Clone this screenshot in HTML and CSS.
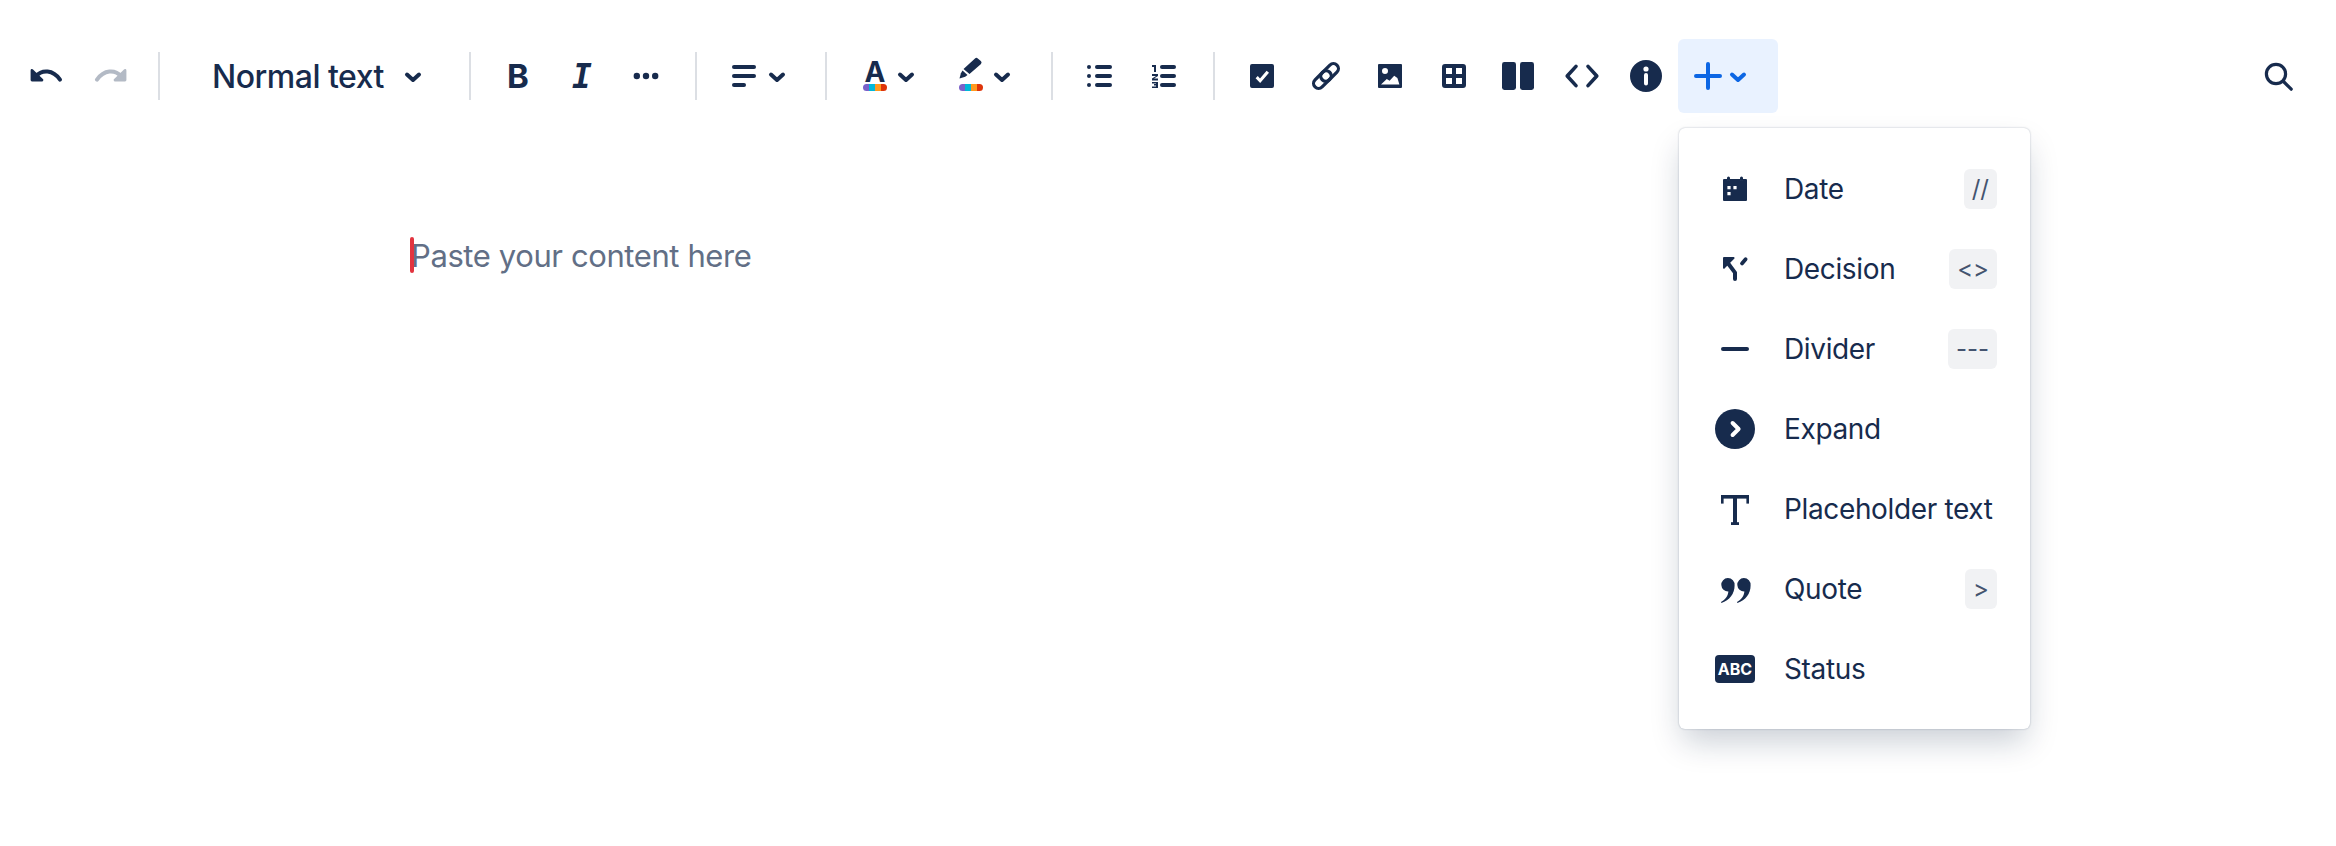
FILE: index.html
```html
<!DOCTYPE html>
<html lang="en">
<head>
<meta charset="utf-8">
<title>Editor</title>
<link rel="stylesheet" href="styles.css">
</head>
<body>
<div class="toolbar">
  <div class="tb-group">
    <button class="btn"><svg class="ic" viewBox="0 0 24 24"><path class="ln" d="M6.800 12.300C10 8.500 15.500 8.800 19 13.800"/><path class="fl" d="M4.300 9.200a.7.7 0 0 1 1.200-.5L10.300 13.400a.7.7 0 0 1-.5 1.300H5a.7.7 0 0 1-.7-.7z"/></svg></button>
    <button class="btn off"><svg class="ic" viewBox="0 0 24 24"><path class="ln" d="M17.700 12.300C14.500 8.500 9 8.800 5.500 13.800"/><path class="fl" d="M20.200 9.200a.7.7 0 0 0-1.200-.5L14.200 13.400a.7.7 0 0 0 .5 1.300h4.800a.7.7 0 0 0 .7-.7z"/></svg></button>
  </div>
  <div class="sep"></div>
  <button class="btn style-btn"><span class="style-label">Normal text</span><svg class="chev" viewBox="0 0 24 24"><path d="M6 10.500l6 5.500 6-5.500"/></svg></button>
  <div class="sep sep-b"></div>
  <div class="tb-group">
    <button class="btn"><span class="glyph-b">B</span></button>
    <button class="btn"><span class="glyph-i">I</span></button>
    <button class="btn"><svg class="ic" viewBox="0 0 24 24"><circle class="fl" cx="7.400" cy="12" r="1.600"/><circle class="fl" cx="12" cy="12" r="1.600"/><circle class="fl" cx="16.600" cy="12" r="1.600"/></svg></button>
  </div>
  <div class="sep sep-c"></div>
  <button class="btn split btn-align"><svg class="ic" viewBox="0 0 24 24"><rect class="fl" x="6" y="6.500" width="12" height="2" rx="1"/><rect class="fl" x="6" y="11" width="12" height="2" rx="1"/><rect class="fl" x="6" y="15.500" width="7" height="2" rx="1"/></svg><svg class="chev chev-tight" viewBox="0 0 24 24"><path d="M6 10.500l6 5.500 6-5.500"/></svg></button>
  <div class="sep sep-d"></div>
  <button class="btn split btn-color"><span class="color-ic"><span class="glyph-a">A</span><span class="rainbow"><i class="c1"></i><i class="c2"></i><i class="c3"></i><i class="c4"></i></span></span><svg class="chev chev-color" viewBox="0 0 24 24"><path d="M6 10.500l6 5.500 6-5.500"/></svg></button>
  <button class="btn split btn-color btn-pen"><span class="color-ic"><svg class="pen" viewBox="0 0 24 22"><path class="fl" d="M16 1.500a2 2 0 0 1 2.800 0l3 2.600a2 2 0 0 1 .2 2.800L10.500 17 4.500 12z"/><path class="fl" d="M3.500 13.500l5 4.500-2.300 1.800-5.700 1.600 1.400-5.200z"/></svg><span class="rainbow"><i class="c1"></i><i class="c2"></i><i class="c3"></i><i class="c4"></i></span></span><svg class="chev chev-color" viewBox="0 0 24 24"><path d="M6 10.500l6 5.500 6-5.500"/></svg></button>
  <div class="sep sep-e"></div>
  <div class="tb-group">
    <button class="btn"><svg class="ic" viewBox="0 0 24 24"><circle class="fl" cx="6.500" cy="7.500" r="1"/><circle class="fl" cx="6.500" cy="12" r="1"/><circle class="fl" cx="6.500" cy="16.500" r="1"/><rect class="fl" x="9.500" y="6.500" width="8.500" height="2" rx="1"/><rect class="fl" x="9.500" y="11" width="8.500" height="2" rx="1"/><rect class="fl" x="9.500" y="15.500" width="8.500" height="2" rx="1"/></svg></button>
    <button class="btn"><svg class="ic" viewBox="0 0 24 24"><path class="fl" d="M6 6.500h2v3.500h-1v-2.500h-1zM6 11h3v1l-2 1.300h2v1h-3v-1l2-1.300h-2zM6 15h3v3h-3v-.8h2v-.4h-1v-.8h1v-.3h-2z"/><rect class="fl" x="10" y="6.500" width="8" height="2" rx="1"/><rect class="fl" x="10" y="11" width="8" height="2" rx="1"/><rect class="fl" x="10" y="15.500" width="8" height="2" rx="1"/></svg></button>
  </div>
  <div class="sep sep-f"></div>
  <div class="tb-group">
    <button class="btn"><svg class="ic" viewBox="0 0 24 24"><path class="fl" fill-rule="evenodd" d="M7 6h10a1 1 0 0 1 1 1v10a1 1 0 0 1-1 1H7a1 1 0 0 1-1-1V7a1 1 0 0 1 1-1zm2.900 6l-1.100 1.100 2.300 2.400 4.400-5.100-1.200-1-3.300 3.800z"/></svg></button>
    <button class="btn"><svg class="ic" viewBox="0 0 24 24"><rect class="ln ln-thin" x="11.300" y="5" width="5" height="10.400" rx="2.500" transform="rotate(45 13.800 10.200)"/><rect class="ln ln-thin" x="7.700" y="8.600" width="5" height="10.400" rx="2.500" transform="rotate(45 10.200 13.800)"/></svg></button>
    <button class="btn"><svg class="ic" viewBox="0 0 24 24"><path class="fl" fill-rule="evenodd" d="M6.500 6h11a.5.5 0 0 1 .5.5v11a.5.5 0 0 1-.5.5h-11a.5.5 0 0 1-.5-.5v-11a.5.5 0 0 1 .5-.5zM9.500 8a1.500 1.500 0 1 0 0 3 1.500 1.500 0 0 0 0-3zM7.500 16.300h9.200l-1-3.300-1.600-1.100-2.300 2.500-1.400-.9z"/></svg></button>
    <button class="btn"><svg class="ic" viewBox="0 0 24 24"><path class="fl" fill-rule="evenodd" d="M7.500 6h9A1.500 1.500 0 0 1 18 7.500v9a1.500 1.500 0 0 1-1.500 1.500h-9A1.500 1.500 0 0 1 6 16.500v-9A1.500 1.500 0 0 1 7.500 6zM8 8v3h3V8zm5 0v3h3V8zm-5 5v3h3v-3zm5 0v3h3v-3z"/></svg></button>
    <button class="btn"><svg class="ic" viewBox="0 0 24 24"><rect class="fl" x="4" y="5" width="7" height="14" rx="1.200"/><rect class="fl" x="13" y="5" width="7" height="14" rx="1.200"/></svg></button>
    <button class="btn"><svg class="ic" viewBox="0 0 24 24"><path class="ln ln-code" d="M9 7.200l-4.400 4.800 4.400 4.800M15 7.200l4.400 4.800-4.400 4.800"/></svg></button>
    <button class="btn"><svg class="ic" viewBox="0 0 24 24"><path class="fl" fill-rule="evenodd" d="M12 4a8 8 0 1 1 0 16 8 8 0 0 1 0-16zm0 3.200a1.300 1.300 0 1 0 0 2.600 1.300 1.300 0 0 0 0-2.600zm-1 4.300v4.300a1 1 0 0 0 2 0v-4.300a1 1 0 0 0-2 0z"/></svg></button>
    <div class="insert">
      <button class="btn split btn-plus"><svg class="ic ic-plus" viewBox="0 0 24 24"><path d="M6 12h12M12 6v12"/></svg><svg class="chev chev-plus" viewBox="0 0 24 24"><path d="M6 10.500l6 5.500 6-5.500"/></svg></button>
      <div class="menu">
        <div class="row"><span class="slot"><svg class="ic" viewBox="0 0 24 24"><path class="fl" fill-rule="evenodd" d="M6.500 7h1.500v.300a1 1 0 0 0 1.500 0V7h5v.300a1 1 0 0 0 1.500 0V7h1.500a.5.5 0 0 1 .5.5v10a.5.500 0 0 1-.5.5h-11a.5.500 0 0 1-.5-.5v-10a.5.500 0 0 1 .5-.5zM8.200 10.500v1.600h1.600v-1.600zm3 0v1.600h1.600v-1.600zm-3 3v1.600h1.600v-1.600z"/><rect class="fl" x="8" y="5.800" width="1.500" height="2.200" rx=".75"/><rect class="fl" x="14.500" y="5.800" width="1.500" height="2.200" rx=".75"/></svg></span><span class="label">Date</span><kbd class="key">//</kbd></div>
        <div class="row"><span class="slot"><svg class="ic" viewBox="0 0 24 24"><path class="ln" d="M12 17v-3.200L8.400 9"/><path class="fl" d="M6.500 6h4.800a.5.5 0 0 1 .3.900L7 11.500a.5.5 0 0 1-1-.3V6.500a.5.5 0 0 1 .5-.5z"/><path class="ln ln-dec2" d="M15.500 9.200l1.800-2.100"/></svg></span><span class="label">Decision</span><kbd class="key">&lt;&gt;</kbd></div>
        <div class="row"><span class="slot"><svg class="ic" viewBox="0 0 24 24"><rect class="fl" x="5" y="11" width="14" height="2" rx="1"/></svg></span><span class="label">Divider</span><kbd class="key">---</kbd></div>
        <div class="row"><span class="slot"><svg class="ic" viewBox="0 0 24 24"><circle class="fl" cx="12" cy="12" r="10"/><path class="ln-w" d="M10.800 9l3 3-3 3"/></svg></span><span class="label">Expand</span></div>
        <div class="row"><span class="slot"><svg class="ic" viewBox="0 0 24 24"><rect class="fl" x="5" y="5" width="14" height="1.800"/><rect class="fl" x="5" y="5" width="1.300" height="4.300"/><rect class="fl" x="17.700" y="5" width="1.300" height="4.300"/><rect class="fl" x="11" y="5" width="2" height="15"/><rect class="fl" x="10" y="18.600" width="4" height="1.400"/></svg></span><span class="label">Placeholder text</span></div>
        <div class="row"><span class="slot"><svg class="ic" viewBox="0 0 24 24"><path class="fl" d="M8.400 6.500a3.400 3.400 0 0 1 3.400 3.800c0 4-2.500 7.500-6.600 8.700l-.2-.5c2.200-1.100 3.500-3 3.700-5.200a3.400 3.400 0 0 1-.3-6.800z"/><path class="fl" transform="translate(8 0)" d="M8.400 6.500a3.400 3.400 0 0 1 3.400 3.800c0 4-2.500 7.500-6.600 8.700l-.2-.5c2.200-1.100 3.500-3 3.700-5.200a3.400 3.400 0 0 1-.3-6.800z"/></svg></span><span class="label">Quote</span><kbd class="key">&gt;</kbd></div>
        <div class="row"><span class="slot"><span class="abc">ABC</span></span><span class="label">Status</span></div>
      </div>
    </div>
  </div>
  <button class="btn btn-search"><svg class="ic" viewBox="0 0 24 24"><circle class="ln ln-search" cx="11" cy="11" r="4.800"/><path class="ln ln-search" d="M15 15l3.600 3.600"/></svg></button>
</div>
<main class="editor">
  <p class="placeholder"><span class="caret"></span>Paste your content here</p>
</main>
</body>
</html>
```
FILE: styles.css
```css
* { box-sizing: border-box; }
html, body { margin: 0; height: 100%; background: #fff; }
body { font-family: Inter, "Liberation Sans", sans-serif; color: #172B4D; overflow: hidden; }
.toolbar { display: flex; align-items: center; padding: 39px 26px 0 14px; }
.tb-group { display: flex; align-items: center; }
button { border: 0; background: none; padding: 0; margin: 0; color: inherit; font: inherit; }
.btn { width: 64px; height: 74px; display: flex; align-items: center; justify-content: center; flex: none; }
.ic { width: 48px; height: 48px; flex: none; display: block; }
.fl { fill: #172B4D; stroke: none; }
.ln { fill: none; stroke: #172B4D; stroke-width: 2; stroke-linecap: round; stroke-linejoin: round; }
.ln-thin { stroke-width: 1.600; }
.ln-code { stroke-width: 1.800; }
.ln-dec2 { stroke-width: 1.900; }
.ln-w { fill: none; stroke: #fff; stroke-width: 2; stroke-linecap: round; stroke-linejoin: round; }
.ln-search { stroke-width: 1.600; }
.off { opacity: .32; }
.sep { width: 2px; height: 48px; background: #DCDFE4; margin: 0 16px; flex: none; }
.sep-b { margin-right: 15px; }
.sep-c { margin: 0 19px 0 17px; }
.sep-d { margin: 0 14px; }
.sep-e { margin: 0 15px 0 18px; }
.sep-f { margin: 0 15px 0 17px; }
.style-btn { width: 277px; justify-content: flex-start; padding-left: 36px; }
.style-label { font-size: 32px; font-weight: 500; line-height: 40px; letter-spacing: -.5px; white-space: nowrap; padding-top: 2px; }
.chev { width: 24px; height: 24px; flex: none; margin-left: 17px; }
.chev path { fill: none; stroke: #172B4D; stroke-width: 4; stroke-linecap: round; stroke-linejoin: round; }
.split { justify-content: flex-start; }
.btn-align { width: 95px; padding-left: 4px; }
.chev-tight { margin-left: -3px; }
.btn-color { width: 94px; padding-left: 22px; }
.btn-pen { width: 98px; padding-left: 24px; }
.chev-color { margin-left: 7px; }
.color-ic { width: 24px; display: flex; flex-direction: column; align-items: center; }
.glyph-a { font-size: 28px; font-weight: 700; line-height: 20px; height: 20px; margin-bottom: 2px; }
.pen { width: 24px; height: 22px; display: block; margin: -5px 0 5px; }
.rainbow { display: flex; width: 24px; height: 7px; border-radius: 4px; overflow: hidden; }
.rainbow i { flex: 1; display: block; }
.c1 { background: #7B61C9; }
.c2 { background: #00B8D9; }
.c3 { background: #FF991F; }
.c4 { background: #DE350B; }
.glyph-b { font-size: 33px; font-weight: 700; line-height: 1; }
.glyph-i { font-family: "DejaVu Sans Mono", monospace; font-style: italic; font-weight: 700; font-size: 33px; line-height: 1; }
.insert { position: relative; }
.btn-plus { width: 100px; background: #E9F2FF; border-radius: 6px; }
.ic-plus { margin-left: 6px; }
.ic-plus path { fill: none; stroke: #0C66E4; stroke-width: 2; stroke-linecap: round; }
.chev-plus { margin-left: -6px; }
.chev-plus path { stroke: #0C66E4; }
.btn-search { margin-left: auto; }
.menu { position: absolute; left: 1px; top: 89px; width: 351px; padding: 21px 33px 20px 32px; background: #fff; border-radius: 6px; box-shadow: 0 0 2px rgba(9, 30, 66, .31), 0 16px 32px -4px rgba(9, 30, 66, .22); }
.row { display: flex; align-items: center; height: 80px; }
.slot { width: 48px; height: 48px; display: flex; align-items: center; justify-content: center; flex: none; margin-right: 25px; }
.label { font-size: 28px; line-height: 40px; letter-spacing: -.36px; flex: 1; white-space: nowrap; }
.key { height: 40px; padding: 0 8px; background: #F1F2F4; border-radius: 6px; color: #44546F; font-family: Inter, sans-serif; font-size: 24px; line-height: 40px; }
.abc { width: 40px; height: 28px; background: #172B4D; color: #fff; border-radius: 4px; font-size: 16px; font-weight: 700; line-height: 28px; text-align: center; }
.editor { padding: 119px 0 0 411px; }
.placeholder { position: relative; margin: 0; font-size: 31px; line-height: 48px; letter-spacing: -.4px; color: #626F86; }
.caret { position: absolute; left: -1px; top: 5px; width: 4px; height: 36px; background: #E2343F; border-radius: 2px; }
```
